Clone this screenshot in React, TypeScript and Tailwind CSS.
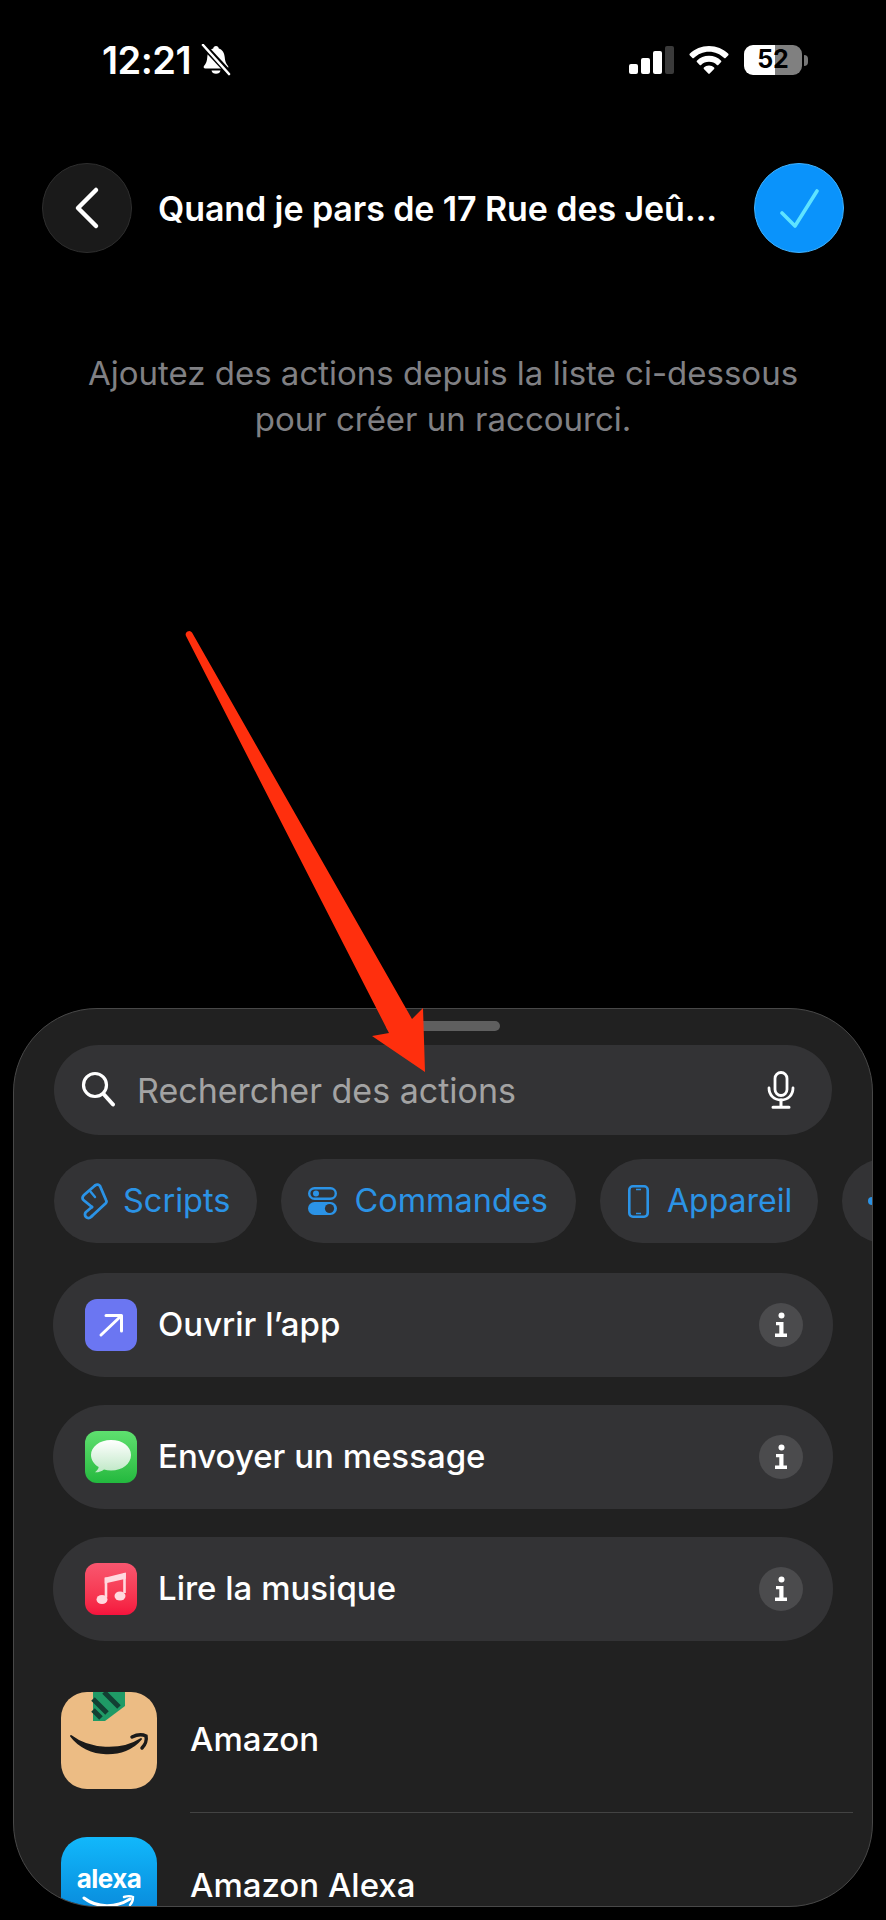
import { ChevronLeft } from "lucide-react";

const shortcuts = [
  { label: "Ouvrir l’app", icon: <OpenAppIcon /> },
  { label: "Envoyer un message", icon: <MessagesIcon /> },
  { label: "Lire la musique", icon: <MusicIcon /> },
];

function BellSlash() {
  return (
    <svg width="30" height="32" viewBox="0 0 30 32" className="ml-[10px]">
      <path d="M15 2c-1.600 0-2.600 1-2.800 2.400C8.400 5.600 6.600 9 6.300 13c-.3 4-1 6.300-3.300 9-.8 1-.2 2.500 1.300 2.500h21.400c1.500 0 2.100-1.500 1.300-2.500-2.300-2.700-3-5-3.300-9-.3-4-2.100-7.400-5.900-8.600C17.600 3 16.600 2 15 2z" fill="#fff" />
      <path d="M10.500 26.500a4.600 4 0 0 0 9 0z" fill="#fff" />
      <path d="M1 0l28 30" stroke="#000" strokeWidth="6" />
      <path d="M2 1l26 29" stroke="#fff" strokeWidth="2.600" strokeLinecap="round" />
    </svg>
  );
}

function Signal() {
  return (
    <div className="flex h-[28px] items-end gap-[3px]">
      <div className="h-[10px] w-[9px] rounded-[2px] bg-white" />
      <div className="h-[16px] w-[9px] rounded-[2px] bg-white" />
      <div className="h-[23px] w-[9px] rounded-[2px] bg-white" />
      <div className="h-[28px] w-[9px] rounded-[2px] bg-[#3a3a3a]" />
    </div>
  );
}

function Wifi() {
  return (
    <svg width="40" height="28" viewBox="0 0 40 28">
      <path d="M20 0C12.500 0 5.700 3 .7 7.800c-.4.4-.4 1 0 1.400l2.700 2.800c.4.4 1 .4 1.400 0C8.800 8.100 14.100 5.700 20 5.700s11.200 2.400 15.200 6.300c.4.4 1 .4 1.400 0l2.700-2.800c.4-.4.4-1 0-1.400C34.300 3 27.500 0 20 0z" fill="#fff" />
      <path d="M20 9.800c-4.700 0-9 1.900-12.100 4.900-.4.4-.4 1 0 1.400l2.800 2.800c.4.400 1 .4 1.400 0 2-1.900 4.800-3.100 7.900-3.100s5.900 1.200 7.900 3.100c.4.4 1 .4 1.400 0l2.800-2.800c.4-.4.4-1 0-1.400C29 11.700 24.700 9.800 20 9.800z" fill="#fff" />
      <path d="M20 19.500c-2 0-3.800.8-5.100 2-.4.4-.4 1 0 1.400l4.400 4.700c.4.4 1 .4 1.400 0l4.400-4.700c.4-.4.4-1 0-1.400-1.300-1.200-3.100-2-5.100-2z" fill="#fff" />
    </svg>
  );
}

function SearchGlyph() {
  return (
    <svg width="36" height="38" viewBox="0 0 36 38" fill="none" stroke="#fff" strokeWidth="3.200" strokeLinecap="round">
      <circle cx="14" cy="14" r="11.500" />
      <path d="M23 23.500l9 10" strokeWidth="4" />
    </svg>
  );
}

function MicGlyph() {
  return (
    <svg width="28" height="38" viewBox="0 0 28 38" fill="none" stroke="#fff" strokeWidth="2.800" strokeLinecap="round">
      <rect x="8" y="1.500" width="12" height="23" rx="6" />
      <path d="M2 17c0 7 5 12 12 12s12-5 12-12" />
      <path d="M14 29v6M6 36.300h16" strokeWidth="3" />
    </svg>
  );
}

function ScriptGlyph() {
  return (
    <svg width="27" height="37" viewBox="0 0 27 37" fill="none" stroke="#2b93e6" strokeWidth="2.800" strokeLinejoin="round" strokeLinecap="round">
      <path d="M14 2.500L3 12c-2 2-2 4 0 5.500L11 24" />
      <path d="M14 2.500c2-1.500 4-1 5 .5l6 14c1 1.500.5 2.500-.5 3.500L11 33" />
      <path d="M11 24l-6 5a3.500 3.500 0 1 0 5 5l1-1" />
      <path d="M9 8l5 6" strokeWidth="2.400" />
    </svg>
  );
}

function ToggleGlyph() {
  return (
    <svg width="29" height="28" viewBox="0 0 29 28">
      <rect x="1.200" y="1.200" width="26.600" height="10.600" rx="5.300" fill="none" stroke="#2b93e6" strokeWidth="2.400" />
      <circle cx="8" cy="6.500" r="3" fill="#2b93e6" />
      <rect x="0" y="15" width="29" height="13" rx="6.500" fill="#2b93e6" />
      <circle cx="21.500" cy="21.500" r="4.600" fill="#333335" />
    </svg>
  );
}

function PhoneGlyph() {
  return (
    <svg width="21" height="33" viewBox="0 0 21 33" fill="none" stroke="#2b93e6">
      <rect x="1.300" y="1.300" width="18.400" height="30.400" rx="3.600" strokeWidth="2.600" />
      <path d="M8 4.500h5M8 28.500h5" strokeWidth="1.400" />
    </svg>
  );
}

function OpenAppIcon() {
  return (
    <div className="flex h-[52px] w-[52px] items-center justify-center rounded-[12px] bg-[#6b76f2]">
      <svg width="26" height="26" viewBox="0 0 26 26" fill="none" stroke="#fff" strokeWidth="3" strokeLinecap="round" strokeLinejoin="round">
        <path d="M3 23L23 4M8 3.500h15.500V19" />
      </svg>
    </div>
  );
}

function MessagesIcon() {
  return (
    <div className="flex h-[52px] w-[52px] items-center justify-center rounded-[12px] bg-gradient-to-b from-[#5ee06f] to-[#22b93e]">
      <svg width="44" height="36" viewBox="0 0 44 36">
        <defs>
          <linearGradient id="bubble" x1="0" y1="0" x2="0" y2="1">
            <stop offset="0" stopColor="#ffffff" />
            <stop offset="1" stopColor="#bfe8c6" />
          </linearGradient>
        </defs>
        <path d="M22 1C10.500 1 2 7.800 2 16c0 5 3 9.300 7.700 12-.3 2-1.700 3.800-3.700 5.300 3.200.2 6.600-.8 9-2.800 2.200.6 4.500 1 7 1 11.500 0 20-6.800 20-15.500S33.500 1 22 1z" fill="url(#bubble)" />
      </svg>
    </div>
  );
}

function MusicIcon() {
  return (
    <div className="flex h-[52px] w-[52px] items-center justify-center rounded-[12px] bg-gradient-to-b from-[#f9566f] to-[#f5123d]">
      <svg width="32" height="36" viewBox="0 0 32 36">
        <path d="M11 6.500v20" stroke="#ffd9df" strokeWidth="2.600" />
        <path d="M29.500 2v20" stroke="#ffd9df" strokeWidth="2.600" />
        <path d="M9.700 6.700L30.800 1.500v6.200L9.700 12.500z" fill="#ffd9df" />
        <ellipse cx="7" cy="28.500" rx="5.500" ry="4.500" fill="#ffd9df" />
        <ellipse cx="25" cy="25" rx="5.500" ry="4.500" fill="#ffd9df" />
      </svg>
    </div>
  );
}

function InfoBadge() {
  return (
    <div className="flex h-[44px] w-[44px] items-center justify-center rounded-full bg-[#4b4b4d]">
      <svg width="14" height="26" viewBox="0 0 14 26" fill="#fff">
        <circle cx="7.500" cy="3.500" r="3" />
        <path d="M2 10h7.500v11.500H13V25H1v-3.500h4.300V13.300H2z" />
      </svg>
    </div>
  );
}

function AmazonIcon() {
  return (
    <div className="h-[97px] w-[96px] shrink-0 overflow-hidden rounded-[26px] bg-[#ecbc84]">
      <svg width="96" height="97" viewBox="0 0 96 97">
        <path d="M32 0h32v14L44 29H32z" fill="#1f9a66" />
        <path d="M32 7l14 14M32 18l8 8M43 0l15 15" stroke="#123f33" strokeWidth="5" />
        <path d="M10 44c18 14 50 16 70 3-16 20-54 19-70-3z" fill="#1a1a1a" stroke="#1a1a1a" strokeWidth="2" strokeLinejoin="round" />
        <path d="M71 45c4-2 10-3 14-1 1 4-1 9-4 12" fill="none" stroke="#1a1a1a" strokeWidth="3.500" strokeLinecap="round" />
      </svg>
    </div>
  );
}

function AlexaIcon() {
  return (
    <div className="flex h-[97px] w-[96px] shrink-0 flex-col items-center rounded-[26px] bg-gradient-to-b from-[#12b8fb] to-[#0a7dd2] pt-[27px]">
      <span className="text-[26px] leading-[30px] font-bold tracking-[-0.5px] text-white">alexa</span>
      <svg width="56" height="18" viewBox="0 0 56 18" fill="none" stroke="#fff" strokeWidth="3" strokeLinecap="round">
        <path d="M3 4c13 10 32 10 46 1" />
        <path d="M43 3c3-1 7-1 9 0 0 3-1 6-3 8" strokeWidth="2.400" />
      </svg>
    </div>
  );
}

export default function App() {
  return (
    <div className="relative flex h-[1920px] w-[886px] flex-col overflow-hidden bg-black font-[family-name:Inter,'Noto_Sans',sans-serif] text-white">
      {/* status bar */}
      <div className="flex h-[120px] shrink-0 items-center justify-between pr-[78px] pl-[102px]">
        <div className="flex items-center">
          <span className="text-[38px] leading-none font-semibold tracking-[-0.5px]">12:21</span>
          <BellSlash />
        </div>
        <div className="flex items-center">
          <Signal />
          <div className="ml-[15px]">
            <Wifi />
          </div>
          <div className="ml-[15px] flex h-[30px] w-[58px] items-center justify-center rounded-[9px] bg-[linear-gradient(90deg,#fff_53%,#808080_53%)] text-[25px] font-bold text-black">
            52
          </div>
          <div className="ml-[2px] h-[11px] w-[4px] rounded-r-full bg-[#777]" />
        </div>
      </div>

      {/* header */}
      <div className="mt-[43px] flex h-[90px] shrink-0 items-center px-[42px]">
        <div className="flex h-[90px] w-[90px] shrink-0 items-center justify-center rounded-full border border-[#2e2e2e] bg-[#1a1a1a]">
          <ChevronLeft size={72} strokeWidth={1.5} className="text-white" />
        </div>
        <div className="ml-[26px] flex-1 text-[34px] font-semibold tracking-[-0.1px]">Quand je pars de 17 Rue des Jeû...</div>
        <div className="flex h-[90px] w-[90px] shrink-0 items-center justify-center rounded-full border border-[#3fb2ff] bg-[#0a93fb]">
          <svg width="40" height="40" viewBox="0 0 40 40" fill="none" stroke="#5fe3ff" strokeWidth="3.600" strokeLinecap="round" strokeLinejoin="round">
            <path d="M3 25l13 13L38 3" />
          </svg>
        </div>
      </div>

      <p className="mt-[97px] text-center text-[33px] leading-[46px] text-[#808084]">
        Ajoutez des actions depuis la liste ci-dessous
        <br />
        pour créer un raccourci.
      </p>

      {/* bottom sheet */}
      <div className="mt-auto mb-[13px] ml-[13px] h-[899px] w-[860px] shrink-0 overflow-hidden rounded-[84px] border border-[#484848] bg-[#212121]">
        <div className="mx-auto mt-[12px] h-[10px] w-[114px] rounded-full bg-[#5f5f5f]" />

        <div className="mx-[40px] mt-[14px] flex h-[90px] items-center rounded-[45px] bg-[#333335] pr-[37px] pl-[27px]">
          <SearchGlyph />
          <span className="ml-[20px] flex-1 text-[34px] text-[#a3a3a3]">Rechercher des actions</span>
          <MicGlyph />
        </div>

        <div className="mt-[24px] ml-[40px] flex gap-[24px] text-[#2b93e6]">
          <div className="flex h-[84px] shrink-0 items-center gap-[15px] rounded-[42px] bg-[#333335] pr-[27px] pl-[27px] text-[32.500px]">
            <ScriptGlyph />
            <span>Scripts</span>
          </div>
          <div className="flex h-[84px] shrink-0 items-center gap-[17px] rounded-[42px] bg-[#333335] pr-[28px] pl-[27px] text-[32.500px]">
            <ToggleGlyph />
            <span>Commandes</span>
          </div>
          <div className="flex h-[84px] shrink-0 items-center gap-[18px] rounded-[42px] bg-[#333335] pr-[26px] pl-[28px] text-[32px]">
            <PhoneGlyph />
            <span>Appareil</span>
          </div>
          <div className="flex h-[84px] w-[100px] shrink-0 items-center rounded-l-[42px] bg-[#333335] pl-[26px]">
            <div className="h-[8px] w-[14px] rounded-full bg-[#2b93e6]" />
          </div>
        </div>

        <div className="mx-[39px] mt-[30px] flex flex-col gap-[28px]">
          {shortcuts.map((s) => (
            <div key={s.label} className="flex h-[104px] items-center rounded-[52px] bg-[#333335] pr-[30px] pl-[32px]">
              {s.icon}
              <span className="ml-[21px] flex-1 text-[33px] font-medium">{s.label}</span>
              <InfoBadge />
            </div>
          ))}
        </div>

        <div className="mt-[27px] pl-[47px]">
          <div className="flex h-[145px] items-center">
            <AmazonIcon />
            <div className="mr-[19px] ml-[33px] flex h-full flex-1 items-center border-b border-[#434343] text-[33px] font-medium">Amazon</div>
          </div>
          <div className="flex h-[145px] items-center">
            <AlexaIcon />
            <div className="mr-[19px] ml-[33px] flex h-full flex-1 items-center text-[33px] font-medium">Amazon Alexa</div>
          </div>
        </div>
      </div>

      {/* red annotation arrow */}
      <svg className="pointer-events-none absolute inset-0" width="886" height="1920" viewBox="0 0 886 1920">
        <path d="M186 636a3.500 3.500 0 0 1 6-3.500L412 1019l11-11 2 64-53-36 17-3z" fill="#ff2f0d" />
      </svg>
    </div>
  );
}
